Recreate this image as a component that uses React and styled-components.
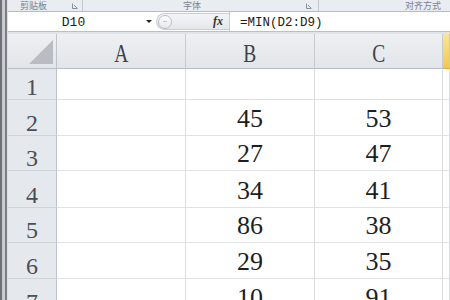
import React from 'react';
import styled, { createGlobalStyle } from 'styled-components';

const SERIF = `"Liberation Serif", "Times New Roman", Tinos, "DejaVu Serif", serif`;
const MONO = `"Liberation Mono", "Courier New", Cousine, "DejaVu Sans Mono", monospace`;

const Global = createGlobalStyle`
  html, body { margin: 0; padding: 0; background: #fff; }
  #root { width: 450px; height: 300px; }
`;

const Window = styled.div`
  width: 450px;
  height: 300px;
  overflow: hidden;
  display: flex;
  background: #fff;
`;

const Frame = styled.div`
  width: 8px;
  flex: none;
  background: linear-gradient(to right, #6f7175 0 2px, #c8ccd2 2px 5px, #7a7d82 5px 7px, #dde0e5 7px 8px);
`;

const Main = styled.div`
  flex: 1;
  min-width: 0;
  display: flex;
  flex-direction: column;
`;

const Ribbon = styled.div`
  height: 11px;
  flex: none;
  display: flex;
  background: #e9ecf0;
  border-bottom: 1px solid #b5bcc6;
`;

const Group = styled.div`
  width: ${p => p.$w}px;
  flex: none;
  box-sizing: border-box;
  display: flex;
  align-items: center;
  padding-left: ${p => p.$pl}px;
  border-right: ${p => (p.$sep ? '1px solid #c3c9d1' : 'none')};
`;

const GroupLabel = styled.span`
  font-family: "Noto Sans CJK SC", sans-serif;
  font-size: 9px;
  line-height: 11px;
  color: #7a818d;
  white-space: nowrap;
  flex: none;
`;

const Launcher = styled.svg`
  margin-left: auto;
  margin-right: ${p => p.$mr}px;
  flex: none;
`;

const FormulaBar = styled.div`
  height: 19px;
  flex: none;
  display: flex;
  align-items: stretch;
  background: #fff;
  border-bottom: 1px solid #b9c0c9;
`;

const NameBox = styled.div`
  width: 131px;
  flex: none;
  display: flex;
  align-items: center;
  justify-content: center;
  font-family: ${MONO};
  font-size: 13px;
  color: #1a1a1a;
  padding-top: 2px;
`;

const DropArea = styled.div`
  width: 17px;
  flex: none;
  display: flex;
  align-items: center;
  justify-content: center;
`;

const DropArrow = styled.span`
  width: 0;
  height: 0;
  border-left: 3px solid transparent;
  border-right: 3px solid transparent;
  border-top: 3px solid #222;
  margin-left: 2px;
`;

const Capsule = styled.div`
  width: 73px;
  flex: none;
  margin: 1px 0;
  box-sizing: border-box;
  display: flex;
  align-items: center;
  justify-content: space-between;
  background: linear-gradient(#f3f4f6, #e4e7eb);
  border: 1px solid #c9ced5;
  border-right: none;
  border-radius: 9px 0 0 9px;
  padding-right: 6px;
`;

const CircleBtn = styled.span`
  width: 14px;
  height: 14px;
  box-sizing: border-box;
  border-radius: 50%;
  border: 1px solid #b8bec6;
  background: linear-gradient(#fbfbfc, #e6e9ed);
  display: flex;
  align-items: center;
  justify-content: center;
  margin-left: 1px;
`;

const CircleMark = styled.span`
  width: 4px;
  height: 1px;
  background: #c0c5cc;
`;

const Fx = styled.span`
  font-family: ${SERIF};
  font-style: italic;
  font-weight: bold;
  font-size: 12px;
  color: #333;
`;

const FormulaInput = styled.div`
  flex: 1;
  display: flex;
  align-items: center;
  padding-left: 10px;
  padding-top: 2px;
  border-left: 1px solid #c5cad1;
  font-family: ${MONO};
  font-size: 12.5px;
  color: #1a1a1a;
  white-space: nowrap;
`;

const Gap = styled.div`
  height: 2px;
  flex: none;
  background: #e1e5ea;
`;

const Sheet = styled.div`
  display: grid;
  grid-template-columns: 49px 129px 129px 128px 1fr;
  grid-template-rows: 35px 31px 36px 35px 37px 35px 36px 36px;
  flex: none;
`;

const Corner = styled.div`
  box-sizing: border-box;
  position: relative;
  background: linear-gradient(#eef0f3, #e2e5e9);
  border-right: 1px solid #bfc4cb;
  border-bottom: 1px solid #b9bec6;
`;

const CornerTriangle = styled.svg`
  position: absolute;
  right: 3px;
  bottom: 4px;
`;

const ColHead = styled.div`
  box-sizing: border-box;
  display: flex;
  align-items: flex-end;
  justify-content: center;
  padding-bottom: 1px;
  background: ${p => (p.$active
    ? 'linear-gradient(#fbe595, #f4c84f)'
    : 'linear-gradient(#eef0f3, #e2e5e9)')};
  border-right: 1px solid #c6cbd2;
  border-bottom: 1px solid ${p => (p.$active ? '#e2a93a' : '#b9bec6')};
`;

const ColLetter = styled.span`
  display: inline-block;
  font-family: ${SERIF};
  font-size: 26px;
  line-height: 26px;
  color: #3d424a;
  transform: scaleX(0.75);
`;

const RowHead = styled.div`
  box-sizing: border-box;
  display: flex;
  align-items: flex-end;
  justify-content: center;
  background: #e5e8ec;
  border-right: 1px solid #bfc4cb;
  border-bottom: 1px solid #d0d4d9;
  font-family: ${SERIF};
  font-size: 24px;
  line-height: 24px;
  color: #4a4e55;
`;

const Cell = styled.div`
  box-sizing: border-box;
  display: flex;
  align-items: flex-end;
  justify-content: center;
  padding-bottom: 3px;
  background: #fff;
  border-right: 1px solid #dadde1;
  border-bottom: 1px solid #e0e2e5;
  font-family: ${SERIF};
  font-size: 26px;
  line-height: 26px;
  color: #1e1e1e;
`;

const dataB = ['', 45, 27, 34, 86, 29, 10];
const dataC = ['', 53, 47, 41, 38, 35, 91];

function LaunchIcon({ mr }) {
  return (
    <Launcher $mr={mr} width="6" height="6" viewBox="0 0 6 6">
      <path d="M0.5 0.5v5h5" fill="none" stroke="#8a909a" strokeWidth="1" />
      <path d="M2 2l3 3" stroke="#8a909a" strokeWidth="1" />
    </Launcher>
  );
}

export default function App() {
  return (
    <Window>
      <Global />
      <Frame />
      <Main>
        <Ribbon>
          <Group $w={75} $pl={12} $sep>
            <GroupLabel>剪贴板</GroupLabel>
            <LaunchIcon mr={4} />
          </Group>
          <Group $w={236} $pl={100} $sep>
            <GroupLabel>字体</GroupLabel>
            <LaunchIcon mr={6} />
          </Group>
          <Group $w={131} $pl={86}>
            <GroupLabel>对齐方式</GroupLabel>
          </Group>
        </Ribbon>
        <FormulaBar>
          <NameBox>D10</NameBox>
          <DropArea><DropArrow /></DropArea>
          <Capsule>
            <CircleBtn><CircleMark /></CircleBtn>
            <Fx>fx</Fx>
          </Capsule>
          <FormulaInput>=MIN(D2:D9)</FormulaInput>
        </FormulaBar>
        <Gap />
        <Sheet>
          <Corner>
            <CornerTriangle width="24" height="24" viewBox="0 0 24 24">
              <polygon points="24,0 24,24 0,24" fill="#b9bdc3" />
            </CornerTriangle>
          </Corner>
          <ColHead><ColLetter>A</ColLetter></ColHead>
          <ColHead><ColLetter>B</ColLetter></ColHead>
          <ColHead><ColLetter>C</ColLetter></ColHead>
          <ColHead $active />
          {dataB.map((b, i) => (
            <React.Fragment key={i}>
              <RowHead>{i + 1}</RowHead>
              <Cell />
              <Cell>{b}</Cell>
              <Cell>{dataC[i]}</Cell>
              <Cell />
            </React.Fragment>
          ))}
        </Sheet>
      </Main>
    </Window>
  );
}
